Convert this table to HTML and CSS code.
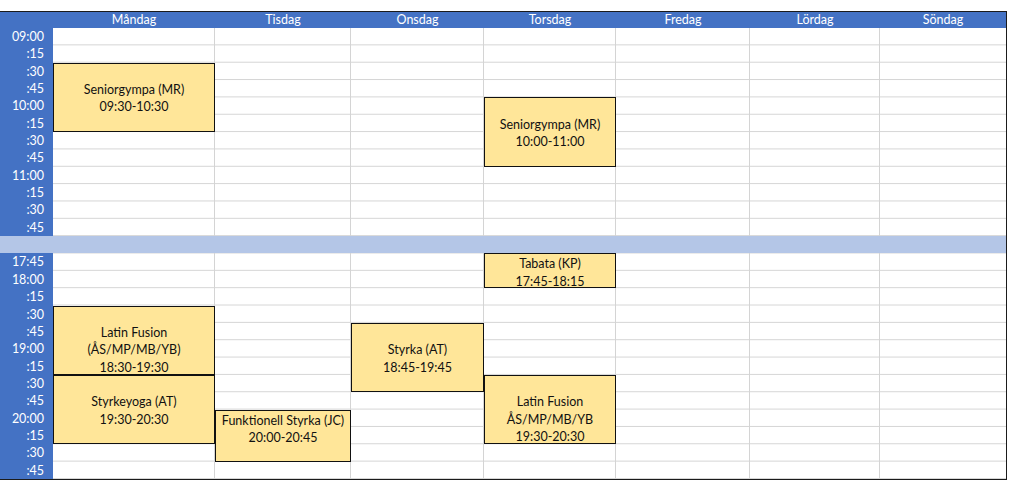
FILE: index.html
```html
<!DOCTYPE html>
<html lang="sv">
<head>
<meta charset="utf-8">
<title>Schema</title>
<link rel="stylesheet" href="styles.css">
</head>
<body>
<div class="sheet">
  <div class="corner"></div>
  <div class="day">Måndag</div>
  <div class="day">Tisdag</div>
  <div class="day">Onsdag</div>
  <div class="day">Torsdag</div>
  <div class="day">Fredag</div>
  <div class="day">Lördag</div>
  <div class="day">Söndag</div>

  <div class="times">
    <div class="t">09:00</div><div class="t">:15</div><div class="t">:30</div><div class="t">:45</div>
    <div class="t">10:00</div><div class="t">:15</div><div class="t">:30</div><div class="t">:45</div>
    <div class="t">11:00</div><div class="t">:15</div><div class="t">:30</div><div class="t">:45</div>
    <div class="t"></div>
    <div class="t">17:45</div><div class="t">18:00</div><div class="t">:15</div><div class="t">:30</div><div class="t">:45</div>
    <div class="t">19:00</div><div class="t">:15</div><div class="t">:30</div><div class="t">:45</div>
    <div class="t">20:00</div><div class="t">:15</div><div class="t">:30</div><div class="t">:45</div>
  </div>

  <div class="col c2"></div>
  <div class="col c3"></div>
  <div class="col c4"></div>
  <div class="col c5"></div>
  <div class="col c6"></div>
  <div class="col c7"></div>
  <div class="col c8 last"></div>

  <div class="band"></div>

  <div class="ev offset" style="grid-column:2; grid-row:4 / span 4"><span>Seniorgympa (MR)</span><span>09:30-10:30</span></div>
  <div class="ev offset" style="grid-column:5; grid-row:6 / span 4"><span>Seniorgympa (MR)</span><span>10:00-11:00</span></div>
  <div class="ev" style="grid-column:5; grid-row:15 / span 2"><span>Tabata (KP)</span><span>17:45-18:15</span></div>
  <div class="ev offset" style="grid-column:2; grid-row:18 / span 4"><span>Latin Fusion</span><span>(ÅS/MP/MB/YB)</span><span>18:30-19:30</span></div>
  <div class="ev offset" style="grid-column:2; grid-row:22 / span 4"><span>Styrkeyoga (AT)</span><span>19:30-20:30</span></div>
  <div class="ev" style="grid-column:3; grid-row:24 / span 3"><span>Funktionell Styrka (JC)</span><span>20:00-20:45</span></div>
  <div class="ev offset" style="grid-column:4; grid-row:19 / span 4"><span>Styrka (AT)</span><span>18:45-19:45</span></div>
  <div class="ev offset" style="grid-column:5; grid-row:22 / span 4"><span>Latin Fusion</span><span>ÅS/MP/MB/YB</span><span>19:30-20:30</span></div>
</div>
</body>
</html>
```
FILE: styles.css
```css
:root {
  --row: 17.35px;
  --blue: #4472c4;
  --band: #b4c6e7;
  --grid: #d4d4d4;
  --event: #ffe699;
}

* { box-sizing: border-box; }

html, body {
  margin: 0;
  padding: 0;
  background: #ffffff;
}

body {
  font-family: Lato, "Open Sans", "Liberation Sans", sans-serif;
  font-size: 12.5px;
  color: #111;
}

.sheet {
  margin-top: 11px;
  width: 1007px;
  display: grid;
  grid-template-columns: 53px 162px 136px 133px 132px 134px 130px 126px;
  grid-template-rows: 16px repeat(26, var(--row));
  border-top: 1px solid #1b1b1b;
  border-right: 1px solid #1b1b1b;
  border-bottom: 1px solid #1b1b1b;
}

.corner,
.day {
  background: var(--blue);
  grid-row: 1;
}

.day {
  color: #ffffff;
  text-align: center;
  line-height: 16px;
}

.times {
  grid-column: 1;
  grid-row: 2 / span 26;
  display: grid;
  grid-template-rows: repeat(26, var(--row));
  background: var(--blue);
}

.t {
  color: #ffffff;
  text-align: right;
  padding-right: 9px;
  line-height: var(--row);
}

.col {
  grid-row: 2 / span 26;
  border-right: 1px solid var(--grid);
  background-image: linear-gradient(to bottom, transparent calc(var(--row) - 1px), var(--grid) calc(var(--row) - 1px));
  background-size: 100% var(--row);
}

.c2 { grid-column: 2; }
.c3 { grid-column: 3; }
.c4 { grid-column: 4; }
.c5 { grid-column: 5; }
.c6 { grid-column: 6; }
.c7 { grid-column: 7; }
.c8 { grid-column: 8; }
.col.last { border-right: none; }

.band {
  grid-column: 1 / -1;
  grid-row: 14;
  background: var(--band);
}

.ev {
  background: var(--event);
  border: 1px solid #111;
  display: flex;
  flex-direction: column;
  align-items: center;
  padding-top: 1px;
  line-height: var(--row);
  color: #111;
  white-space: nowrap;
}

.ev.offset {
  padding-top: var(--row);
}
```
